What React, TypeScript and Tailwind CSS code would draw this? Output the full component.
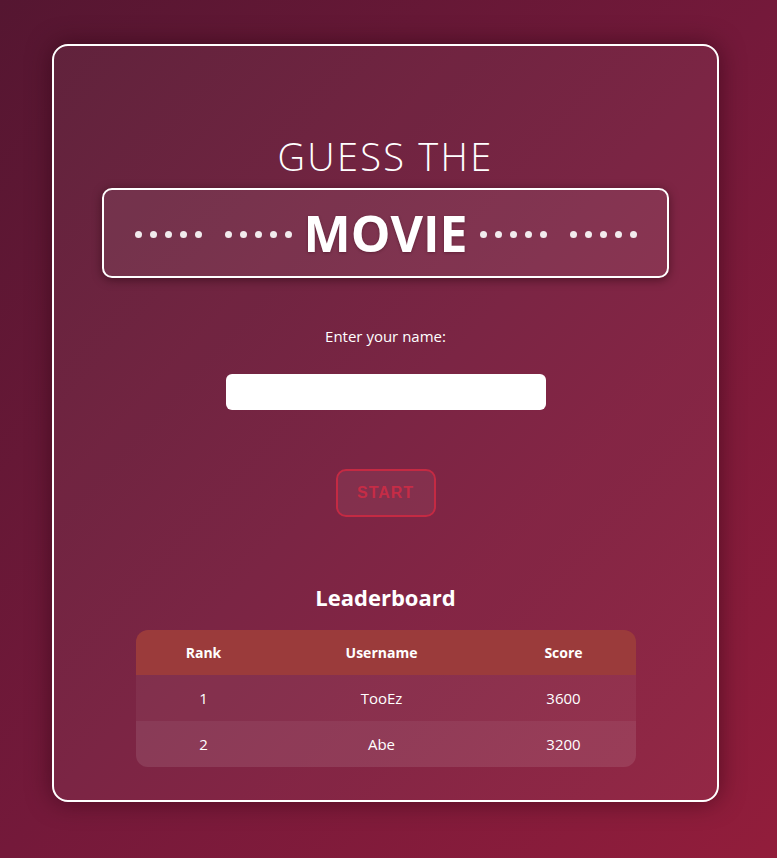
const rows = [
  { rank: 1, name: "TooEz", score: 3600 },
  { rank: 2, name: "Abe", score: 3200 },
];

const Dots = () => (
  <span className="flex gap-[8px] mt-[3px]">
    {[0, 1, 2, 3, 4].map((d) => (
      <span key={d} className="w-[7px] h-[7px] rounded-full bg-white/90" />
    ))}
  </span>
);

export default function App() {
  return (
    <div
      className="min-h-[858px] w-full bg-gradient-to-br from-[#551631] via-[#74193a] to-[#921d3b] pt-[44px] pb-[56px] px-[52px] text-white"
      style={{ fontFamily: '"Open Sans", "Noto Sans", sans-serif' }}
    >
      <div className="w-[667px] h-[758px] rounded-2xl border-2 border-white bg-white/5 shadow-[0_0_24px_rgba(40,0,15,0.55)] flex flex-col items-center pt-[87px]">
        <h1 className="text-[38px] leading-[46px] font-light tracking-[0.06em]">GUESS THE</h1>
        <div className="mt-[9px] w-[567px] h-[90px] rounded-[10px] border-2 border-white bg-white/[0.07] shadow-[0_2px_10px_rgba(30,0,10,0.5)] flex items-center justify-center">
          <Dots />
          <span className="w-[23px]" />
          <Dots />
          <span className="text-[50px] font-bold leading-none mx-[12px]" style={{ textShadow: "0 1px 3px rgba(40,0,15,0.35)" }}>MOVIE</span>
          <Dots />
          <span className="w-[23px]" />
          <Dots />
        </div>
        <p className="mt-[48px] text-[15px] leading-[20px]">Enter your name:</p>
        <input className="mt-[28px] w-[320px] h-[36px] rounded-md bg-white outline-none px-3 text-black" />
        <button
          className="mt-[59px] w-[100px] h-[48px] rounded-[10px] border-2 border-[#c42a43] bg-white/5 text-[#c62c46] font-bold text-[16px] tracking-[0.06em]"
          style={{ fontFamily: '"Liberation Sans", Arial, sans-serif' }}
        >
          START
        </button>
        <h2 className="mt-[65px] text-[22px] font-bold leading-[30px]">Leaderboard</h2>
        <div className="mt-[18px] w-[500px] rounded-xl overflow-hidden text-[15px]">
          <div className="grid grid-cols-[136px_220px_144px] h-[45px] items-center bg-[#9b3b3b] font-bold text-[14px] text-center">
            <span>Rank</span>
            <span>Username</span>
            <span>Score</span>
          </div>
          {rows.map((r, i) => (
            <div
              key={r.rank}
              className={
                "grid grid-cols-[136px_220px_144px] h-[46px] items-center text-center " +
                (i === 0 ? "bg-white/5" : "bg-white/10")
              }
            >
              <span>{r.rank}</span>
              <span>{r.name}</span>
              <span>{r.score}</span>
            </div>
          ))}
        </div>
      </div>
    </div>
  );
}
